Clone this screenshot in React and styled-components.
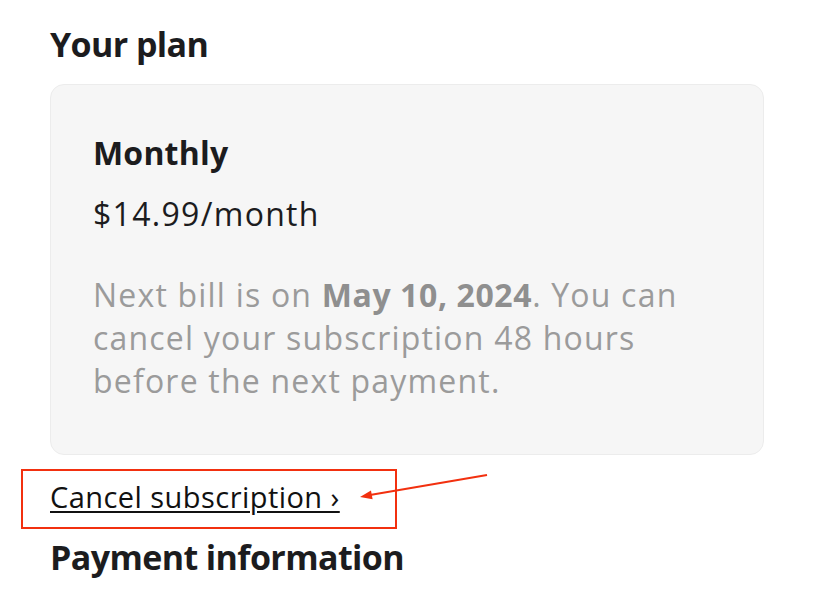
import styled, { createGlobalStyle } from "styled-components";

const GlobalStyle = createGlobalStyle`
  html, body {
    margin: 0;
    padding: 0;
    background: #ffffff;
  }
  body {
    font-family: "Open Sans", "Noto Sans", sans-serif;
    color: #1c1c1e;
  }
`;

const Page = styled.div`
  width: 819px;
  height: 589px;
  overflow: hidden;
  padding: 24px 55px 0 50px;
  box-sizing: border-box;
`;

const SectionTitle = styled.h2`
  margin: ${(p) => p.$gap || 0}px 0 0;
  font-size: 34px;
  font-weight: 700;
  line-height: 40px;
  letter-spacing: -0.6px;
`;

const PlanCard = styled.div`
  margin-top: 20px;
  background: #f6f6f6;
  border: 1px solid #ececec;
  border-radius: 14px;
  padding: 48px 42px 52px 42px;
`;

const PlanName = styled.div`
  font-size: 32px;
  font-weight: 700;
  line-height: 40px;
  letter-spacing: 0.2px;
`;

const PlanPrice = styled.div`
  margin-top: 21px;
  font-size: 32px;
  font-weight: 400;
  line-height: 40px;
  letter-spacing: 1.3px;
`;

const PlanNote = styled.p`
  margin: 39px 0 0;
  font-size: 32px;
  line-height: 43px;
  letter-spacing: 1.2px;
  color: #9b9b9b;

  strong {
    font-weight: 700;
    letter-spacing: 0.6px;
    color: #8f8f8f;
  }
`;

const LinkRow = styled.div`
  position: relative;
  margin-top: 24px;
  height: 36px;
  display: flex;
  align-items: center;
`;

const CancelLink = styled.a`
  font-size: 29px;
  line-height: 36px;
  letter-spacing: 0.45px;
  color: #111;
  text-decoration: underline;
  text-underline-offset: 3px;
  text-decoration-thickness: 2px;
`;

const Highlight = styled.div`
  position: absolute;
  left: -29px;
  top: -10px;
  width: 376px;
  height: 60px;
  border: 2px solid #f2300f;
  box-sizing: border-box;
  pointer-events: none;
`;

const Arrow = styled.svg`
  position: absolute;
  left: 300px;
  top: -10px;
  overflow: visible;
`;

export default function App() {
  return (
    <>
      <GlobalStyle />
      <Page>
        <SectionTitle>Your plan</SectionTitle>
        <PlanCard>
          <PlanName>Monthly</PlanName>
          <PlanPrice>$14.99/month</PlanPrice>
          <PlanNote>
            Next bill is on <strong>May 10, 2024</strong>. You can cancel your
            subscription 48 hours before the next payment.
          </PlanNote>
        </PlanCard>
        <LinkRow>
          <CancelLink href="#">Cancel subscription ›</CancelLink>
          <Highlight />
          <Arrow width="150" height="40" viewBox="0 0 150 40">
            <line x1="137" y1="6" x2="20" y2="26" stroke="#f2300f" strokeWidth="2" />
            <polygon points="10,28 22.6,30.3 21,21.5" fill="#f2300f" />
          </Arrow>
        </LinkRow>
        <SectionTitle $gap={22}>Payment information</SectionTitle>
      </Page>
    </>
  );
}
